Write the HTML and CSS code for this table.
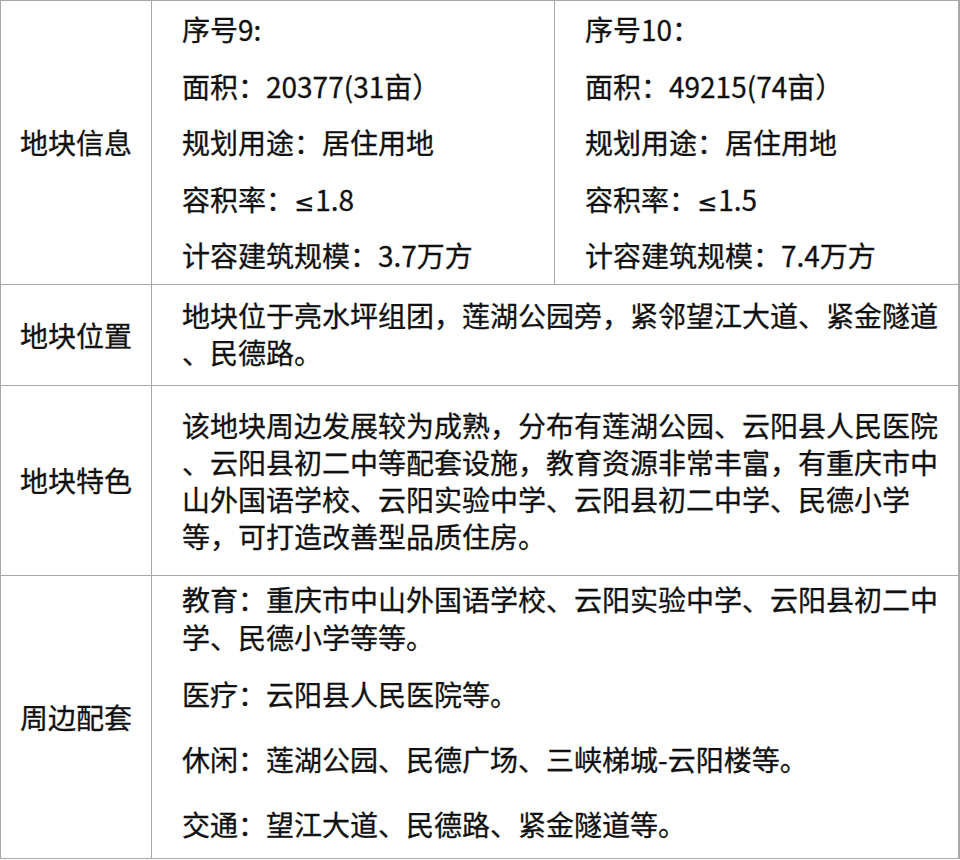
FILE: index.html
```html
<!DOCTYPE html>
<html lang="zh-CN">
<head>
<meta charset="utf-8">
<title>地块信息</title>
<link rel="stylesheet" href="styles.css">
</head>
<body>
<table class="land">
  <colgroup>
    <col class="c-label">
    <col class="c-a">
    <col class="c-b">
  </colgroup>
  <tbody>
    <tr class="row-info">
      <td class="label">地块信息</td>
      <td class="cell half">
        <p>序号9:</p>
        <p>面积：20377(31亩）</p>
        <p>规划用途：居住用地</p>
        <p>容积率：<span class="le">≤</span>1.8</p>
        <p>计容建筑规模：3.7万方</p>
      </td>
      <td class="cell half">
        <p>序号10：</p>
        <p>面积：49215(74亩）</p>
        <p>规划用途：居住用地</p>
        <p>容积率：<span class="le">≤</span>1.5</p>
        <p>计容建筑规模：7.4万方</p>
      </td>
    </tr>
    <tr class="row-pos">
      <td class="label">地块位置</td>
      <td class="cell wide" colspan="2">
        <p>地块位于亮水坪组团，莲湖公园旁，紧邻望江大道、紧金隧道<br>、民德路。</p>
      </td>
    </tr>
    <tr class="row-feat">
      <td class="label">地块特色</td>
      <td class="cell wide" colspan="2">
        <p>该地块周边发展较为成熟，分布有莲湖公园、云阳县人民医院<br>、云阳县初二中等配套设施，教育资源非常丰富，有重庆市中<br>山外国语学校、云阳实验中学、云阳县初二中学、民德小学<br>等，可打造改善型品质住房。</p>
      </td>
    </tr>
    <tr class="row-around">
      <td class="label">周边配套</td>
      <td class="cell wide" colspan="2">
        <p class="edu">教育：重庆市中山外国语学校、云阳实验中学、云阳县初二中<br>学、民德小学等等。</p>
        <p class="med">医疗：云阳县人民医院等。</p>
        <p class="leis">休闲：莲湖公园、民德广场、三峡梯城-云阳楼等。</p>
        <p class="traf">交通：望江大道、民德路、紧金隧道等。</p>
      </td>
    </tr>
  </tbody>
</table>
</body>
</html>
```

FILE: styles.css
```css
html, body {
  margin: 0;
  padding: 0;
  background: #ffffff;
}

body {
  font-family: "Noto Sans CJK SC", "Noto Sans", sans-serif;
  font-size: 28px;
  color: #111111;
  -webkit-text-stroke: 0.3px #111111;
}

.land {
  border-collapse: collapse;
  table-layout: fixed;
  width: 958px;
}

.c-label { width: 151px; }
.c-a { width: 403px; }
.c-b { width: 404px; }

.land td {
  border: 1px solid #a8a8a8;
  padding: 0;
  vertical-align: middle;
}

.land tr > td:last-child {
  border-right: 2px solid #a8a8a8;
}

.label {
  text-align: center;
  white-space: nowrap;
}

.cell p {
  margin: 0;
  white-space: nowrap;
}

.le {
  font-family: "DejaVu Sans", sans-serif;
  font-size: 24px;
  line-height: 0;
  margin-right: 1px;
}

.half {
  padding: 0 0 0 30px !important;
}

.half p {
  line-height: 56.6px;
}

.wide {
  padding-left: 30px !important;
  padding-right: 10px !important;
}

.wide p {
  line-height: 37px;
}

.row-pos .wide {
  padding-top: 12px !important;
  padding-bottom: 14px !important;
}

.row-feat .wide {
  padding-top: 21px !important;
  padding-bottom: 20px !important;
}

.row-around .wide {
  padding-top: 4px !important;
  padding-bottom: 15px !important;
}

.row-around .wide p {
  line-height: 38px;
}

.row-around .med { margin-top: 19px; }
.row-around .leis { margin-top: 27px; }
.row-around .traf { margin-top: 27px; }
```
